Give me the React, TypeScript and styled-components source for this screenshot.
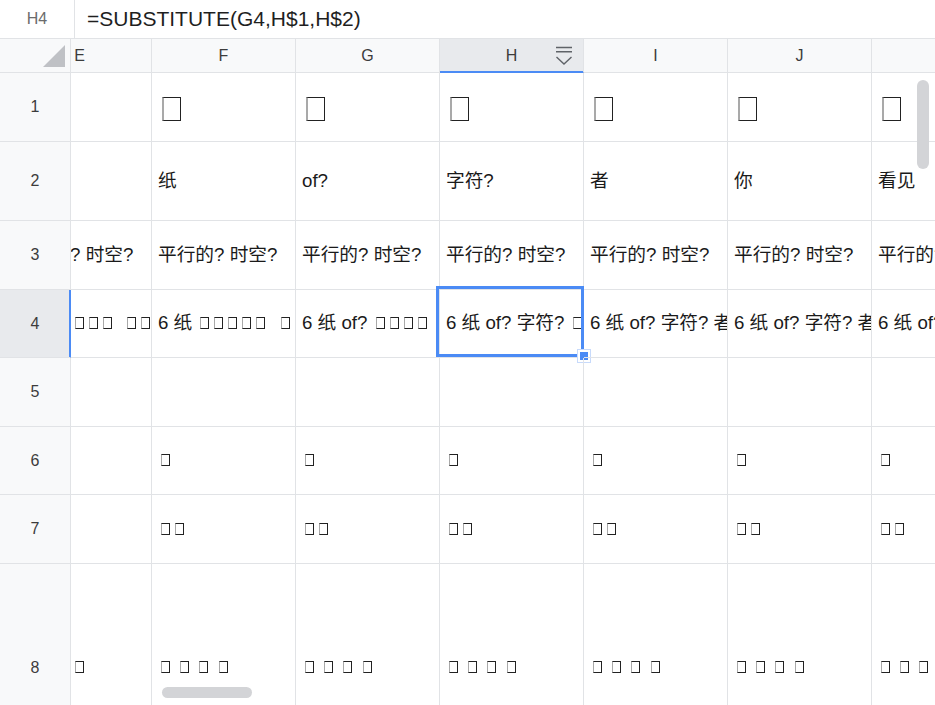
import styled, { createGlobalStyle } from "styled-components";

const GlobalStyle = createGlobalStyle`
	html, body {
		margin: 0;
		padding: 0;
		overflow: hidden;
		background: #ffffff;
	}

	body {
		font-family: "Liberation Sans", "Noto Sans CJK SC", sans-serif;
		color: #1f1f1f;
	}
`;

// ▯ marks a character the font could not draw (shown as an empty box)
const BOX = "▯";

const COLUMNS = ["E", "F", "G", "H", "I", "J", "K"];
const ROW_HEIGHTS = [69, 79, 69, 68, 69, 68, 69, 208];
const SELECTED_ROW = 4;
const SELECTED_COL = "H";

const CELLS: string[][] = [
	["", BOX, BOX, BOX, BOX, BOX, BOX],
	["", "纸", "of?", "字符?", "者", "你", "看见"],
	[
		"平行的? 时空?",
		"平行的? 时空?",
		"平行的? 时空?",
		"平行的? 时空?",
		"平行的? 时空?",
		"平行的? 时空?",
		"平行的? 时空?",
	],
	[
		"6▯ ▯▯▯▯▯  ▯▯▯",
		"6 纸 ▯▯▯▯▯  ▯▯",
		"6 纸 of? ▯▯▯▯  ▯",
		"6 纸 of? 字符? ▯▯▯  ▯",
		"6 纸 of? 字符? 者 ▯▯  ▯",
		"6 纸 of? 字符? 者 你 ▯  ▯",
		"6 纸 of? 字符? 者 你 看见  ▯",
	],
	["", "", "", "", "", "", ""],
	["", BOX, BOX, BOX, BOX, BOX, BOX],
	["", "▯▯", "▯▯", "▯▯", "▯▯", "▯▯", "▯▯"],
	[
		"▯ ▯ ▯ ▯",
		"▯ ▯ ▯ ▯",
		"▯ ▯ ▯ ▯",
		"▯ ▯ ▯ ▯",
		"▯ ▯ ▯ ▯",
		"▯ ▯ ▯ ▯",
		"▯ ▯ ▯ ▯",
	],
];

const renderText = (value: string, large: boolean) =>
	value.split(/(▯)/).map((part, i) =>
		part === BOX ? (
			<Tofu key={i} $large={large} />
		) : (
			<span key={i}>{part}</span>
		),
	);

const FilterIcon = () => (
	<svg width="18" height="19" viewBox="0 0 18 19" fill="none">
		<path d="M1 1.5h16M1 5.8h16" stroke="#5f6368" strokeWidth="1.4" />
		<path d="M1.5 11l7.5 7 7.5-7" stroke="#5f6368" strokeWidth="1.4" />
	</svg>
);

const App = () => {
	return (
		<Page>
			<GlobalStyle />
			<FormulaBar>
				<NameBox>H4</NameBox>
				<Formula>=SUBSTITUTE(G4,H$1,H$2)</Formula>
			</FormulaBar>
			<Sheet>
				<RowHeaders>
					<Corner>
						<svg width="22" height="22" viewBox="0 0 22 22">
							<path d="M0 22L22 0V22Z" fill="#bfc1c5" />
						</svg>
					</Corner>
					{ROW_HEIGHTS.map((h, i) => (
						<RowNumber key={i} $height={h} $selected={i + 1 === SELECTED_ROW}>
							{i + 1}
						</RowNumber>
					))}
				</RowHeaders>
				<Viewport>
					<Strip>
						<HeaderRow>
							{COLUMNS.map((col) => (
								<ColumnHeader key={col} $selected={col === SELECTED_COL}>
									{col !== "K" ? col : null}
									{col === SELECTED_COL ? (
										<HeaderMenu>
											<FilterIcon />
										</HeaderMenu>
									) : null}
								</ColumnHeader>
							))}
						</HeaderRow>
						{CELLS.map((row, r) => (
							<Row key={r} $height={ROW_HEIGHTS[r]}>
								{row.map((value, c) => {
									const selected =
										r + 1 === SELECTED_ROW && COLUMNS[c] === SELECTED_COL;
									return (
										<Cell key={c}>
											<CellText>{renderText(value, r === 0)}</CellText>
											{selected ? (
												<Selection>
													<FillHandle />
												</Selection>
											) : null}
										</Cell>
									);
								})}
							</Row>
						))}
					</Strip>
				</Viewport>
				<VScrollThumb />
				<HScrollThumb />
			</Sheet>
		</Page>
	);
};

export default App;

const GRID = "#e1e3e6";
const HEADER_BG = "#f8f9fa";
const HEADER_ACTIVE = "#e8eaed";
const BLUE = "#4b8bf5";

const Page = styled.div`
	display: flex;
	flex-direction: column;
	width: 100vw;
	height: 100vh;
	overflow: hidden;
`;

const FormulaBar = styled.div`
	display: flex;
	flex: none;
	height: 39px;
	box-sizing: border-box;
	border-bottom: 1px solid ${GRID};
	background: #ffffff;
`;

const NameBox = styled.div`
	width: 75px;
	box-sizing: border-box;
	border-right: 1px solid ${GRID};
	display: flex;
	align-items: center;
	justify-content: center;
	font-size: 16px;
	color: #6b6b6b;
`;

const Formula = styled.div`
	display: flex;
	align-items: center;
	padding-left: 12px;
	font-size: 21px;
	color: #1f1f1f;
	white-space: nowrap;
`;

const Sheet = styled.div`
	position: relative;
	display: flex;
	flex: 1;
	min-height: 0;
	overflow: hidden;
`;

const RowHeaders = styled.div`
	flex: none;
	width: 71px;
	display: flex;
	flex-direction: column;
	background: ${HEADER_BG};
`;

const Corner = styled.div`
	flex: none;
	height: 34px;
	box-sizing: border-box;
	border-right: 1px solid ${GRID};
	border-bottom: 1px solid ${GRID};
	display: flex;
	align-items: flex-end;
	justify-content: flex-end;
	padding: 0 5px 5px 0;
`;

const RowNumber = styled.div<{ $height: number; $selected: boolean }>`
	flex: none;
	height: ${(props) => props.$height}px;
	box-sizing: border-box;
	border-bottom: 1px solid ${GRID};
	border-right: 1px solid ${(props) => (props.$selected ? BLUE : GRID)};
	box-shadow: ${(props) => (props.$selected ? `inset -1px 0 0 ${BLUE}` : "none")};
	background: ${(props) => (props.$selected ? HEADER_ACTIVE : HEADER_BG)};
	display: flex;
	align-items: center;
	justify-content: center;
	font-size: 16px;
	color: #3c3c3c;
`;

const Viewport = styled.div`
	flex: 1;
	min-width: 0;
	overflow: hidden;
`;

/* the sheet is scrolled sideways: column E is partly hidden behind the row numbers */
const Strip = styled.div`
	width: max-content;
	margin-left: -63px;
`;

const HeaderRow = styled.div`
	display: flex;
	height: 34px;
`;

const ColumnHeader = styled.div<{ $selected: boolean }>`
	position: relative;
	flex: none;
	width: 144px;
	box-sizing: border-box;
	border-right: 1px solid ${GRID};
	border-bottom: 1px solid ${(props) => (props.$selected ? BLUE : GRID)};
	box-shadow: ${(props) => (props.$selected ? `inset 0 -1px 0 ${BLUE}` : "none")};
	background: ${(props) => (props.$selected ? HEADER_ACTIVE : HEADER_BG)};
	display: flex;
	align-items: center;
	justify-content: center;
	font-size: 16px;
	color: #3c3c3c;
`;

const HeaderMenu = styled.span`
	position: absolute;
	right: 10px;
	top: 7px;
	display: flex;
`;

const Row = styled.div<{ $height: number }>`
	display: flex;
	height: ${(props) => props.$height}px;
`;

const Cell = styled.div`
	position: relative;
	flex: none;
	width: 144px;
	box-sizing: border-box;
	border-right: 1px solid ${GRID};
	border-bottom: 1px solid ${GRID};
	display: flex;
	align-items: center;
`;

const CellText = styled.div`
	width: 100%;
	box-sizing: border-box;
	padding: 4px 6px;
	overflow: hidden;
	white-space: pre;
	font-size: 18.7px;
	line-height: 1;
	color: #1a1a1a;
`;

const Tofu = styled.span<{ $large: boolean }>`
	display: inline-block;
	box-sizing: border-box;
	vertical-align: ${(props) => (props.$large ? "-4px" : "0")};
	width: ${(props) => (props.$large ? 19 : 9)}px;
	height: ${(props) => (props.$large ? 24 : 12)}px;
	margin: ${(props) => (props.$large ? "4px 2px 0 4px" : "0 2px 0 3px")};
	border: ${(props) => (props.$large ? 1.5 : 1)}px solid #222;
	border-left: ${(props) => (props.$large ? 2 : 1)}px solid #a9a9a9;
`;

const Selection = styled.div`
	position: absolute;
	left: -4px;
	top: -4px;
	right: -1px;
	bottom: 0;
	border: 3px solid ${BLUE};
	pointer-events: none;
`;

const FillHandle = styled.div`
	position: absolute;
	right: -7px;
	bottom: -6px;
	width: 8px;
	height: 8px;
	background: ${BLUE};
	box-shadow:
		0 0 0 2px #ffffff,
		0 0 0 3px #c7dafb;
`;

const VScrollThumb = styled.div`
	position: absolute;
	right: 6px;
	top: 41px;
	width: 12px;
	height: 89px;
	border-radius: 6px;
	background: #d3d4d7;
`;

const HScrollThumb = styled.div`
	position: absolute;
	left: 162px;
	bottom: 7px;
	width: 90px;
	height: 11px;
	border-radius: 6px;
	background: #d3d4d7;
`;
